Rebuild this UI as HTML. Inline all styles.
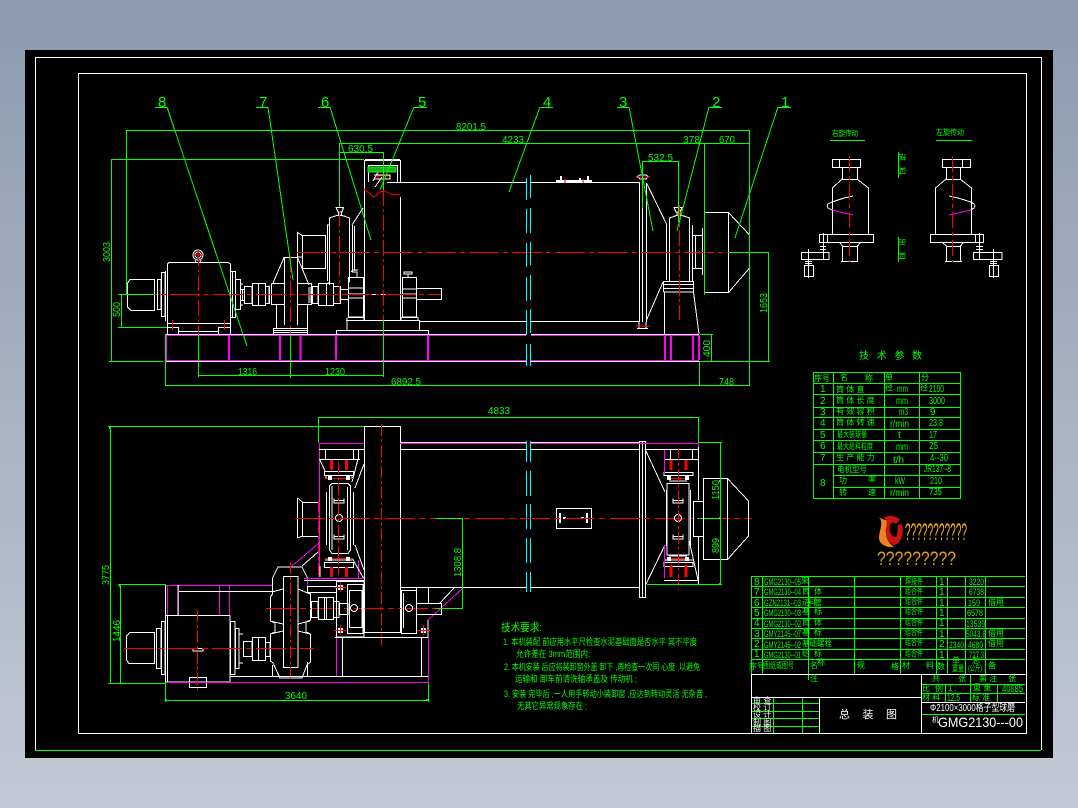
<!DOCTYPE html>
<html><head><meta charset="utf-8"><title>GMG2130</title>
<style>
html,body{margin:0;padding:0;width:1078px;height:808px;overflow:hidden;background:linear-gradient(#8b9bb0,#c3c8d4)}
svg{position:absolute;left:0;top:0;display:block}
text{font-family:"Liberation Sans","WenQuanYi Zen Hei","Noto Sans CJK SC",sans-serif}
.w{stroke:#fff;fill:none}.g{stroke:#0f0;fill:none}.r{stroke:#f00;fill:none}.m{stroke:#f0f;fill:none}.c{stroke:#0ff;fill:none}
.t{fill:#0f0;font-size:10px}.n{fill:#0f0;font-size:9.5px}.s{fill:#0f0;font-size:8px}.l{fill:#0f0;font-size:15px}
</style></head><body>
<svg width="1078" height="808" viewBox="0 0 1078 808" shape-rendering="crispEdges">
<rect x="25" y="50" width="1028" height="708" fill="#000"/>
<path class="w" d="M35.5 750V57.5H1041.5V750M78.5 733.5V73.5H1026.5V733.5H78.5"/>
<path class="g" d="M35 750.5H1041"/>

<!-- ELEVATION white -->
<path class="w" d="M387 182.5H526M531 182.5H639M420 321.5H526M531 321.5H639"/>
<path class="w" d="M364.5 320V160.5H400.5V182M365 159.5H400M364.5 160V320M400.5 197V320M368.5 182V165.5H397.5V182M364 294.5H400M347 320.5V330.5H419.5V320M336.5 334V330.5H428.5V334M346 320.5H420"/>
<path class="w" d="M373 181L378 172M375 187L382 177M378 172H382"/>
<path class="w" d="M348.5 317V277.5H363.5V317ZM347 317.5V320M364 317.5V320M348 288H363M348 294H363M348 298H363M402.5 317V277.5H416.5V317ZM401 317.5V320M418 317.5V320M402 289H416M402 294H416M402 298H416M416 288.5H441.5V299.5H416M348 317.5H364M401 317.5H418"/>
<path class="w" d="M352 272H357V277M353 272H356M351 272L353 270H358M404 272H412V274H404ZM408 274V277.5"/>
<!-- main bearing left -->
<path class="w" d="M329.5 285V218L335 216L339 215L344 216L349.5 218V282M327.5 225V281M352.5 225V272M354.5 226V271M336 207.5H343.5L342 212H338ZM338.5 212V216M341.5 212V216M352 225L363 208M327 225H329M327.5 283H329"/>
<path class="w" d="M297.5 232V258M297 232L302 235.5M302.5 235.5H325.5V268.5H302.5Z M298 257L302 257M302.5 258V268"/>
<!-- reducer -->
<path class="w" d="M273 283L284 257.5H297.5L309 285M284.5 257V325M297.5 257V325M271.5 283.5H284M298 283.5H311.5V304.5H298M284 304.5H271.5V283.5M276.5 305V328M307.5 305V328M273.5 328.5H307.5V334M273.5 328V334M273 330.5H307M273 332.5H307M269 285.5V303"/>
<!-- couplings -->
<path class="w" d="M242.5 290V300M244.5 286.5H252V303.5H244.5ZM252.5 283.5H265.5V305.5H252.5ZM258.5 283.5V305.5M265.5 286.5H269.5V303.5H265.5ZM240 289.5H244M240 300.5H244M312.5 286.5H318V303.5H312.5ZM318.5 283.5H333.5V305.5H318.5ZM326.5 283.5V305.5M333.5 286.5H340.5V303.5H333.5ZM340.5 289.5H348M340.5 299.5H348M309 287V303M311 287V303"/>
<!-- motor -->
<path class="w" d="M167.5 323V264L169 262.5H228L230.5 264V323M165.5 271V321M232.5 272V317.5M230 271.5H235.5V317.5H230M235.5 279.5H240.5V309.5H235.5M240 284H243M240 305H243M161.5 272.5H165V316.5H161.5ZM157.5 279.5H161V309.5H157.5ZM130 279.5H154.5V310.5H131L127.5 307V283ZM167 323.5H230M167.5 323V334M230.5 323V334M167.5 327.5H178.5V334M218.5 334V327.5H230.5M178 331.5H218"/>
<circle class="w" cx="198" cy="255" r="5"/><circle class="w" cx="198" cy="255" r="3"/>
<path class="w" d="M195 260L196 262M201 260L200 262"/>
<!-- base -->
<path class="m" stroke-width="2" d="M166 335V360M229 335V360M280 335V360M300.5 335V360M336 335V360M428 335V360M665 335V360M671 335V360M693 335V360M699 335V360"/>
<path class="w" d="M165 334.5H526M531 334.5H699M165 361.5H526M531 361.5H699"/>
<path class="m" d="M165 335.5H526M531 335.5H699M165 360.5H526M531 360.5H699"/>
<!-- right end elevation -->
<path class="w" d="M639.5 182V322M646.5 183V322M642.5 182V322M637 176.5L640 175H646L648 176.5L646 179H640ZM637 328.5H648M639 328V322M646 328V322M646.5 183L667 225M646.5 320L663 282"/>
<path class="w" d="M669.5 282V218L675 216L678 215L684 216L689.5 218V282M666.5 225V280M692.5 225V281M674 207.5H682L680 212H676ZM677 212V216M680 212V216M663.5 292V281.5H693.5V292H663.5M663 284.5H693M663 288.5H693M664.5 292V334M693.5 292L699 334M692 235.5H703M692 268.5H703M692.5 235V268M695.5 235V268M702.5 228V275M704.5 212.5H728.5V292.5H704.5ZM728.5 212.5L749.5 235V268L728.5 292.5"/>
<path class="w" stroke-width="2" d="M556 181H592M561 176V181M588 176V181M580 178V181"/>
<path class="r" d="M565 178V183M583 178V183"/>
<!-- elevation red -->
<path class="r" stroke-dasharray="30 4 5 4" d="M297 252.5H728M127 294.5H441"/>
<path class="r" stroke-dasharray="16 3 3 3" d="M198.5 250V334M339.5 211V305M290.5 256V334M383.5 190V320M679.5 205V320"/>
<path class="r" d="M172.5 320V330M224.5 320V330M194 255H202M198 251V259M376 176H390M378 172V180M364 189L371 195L374 197L380 192L385 191L390 194L396 195L400 194M650 177H636M636 326H650"/>
<path d="M368 167H396V172H368Z" fill="#2a2" stroke="#0f0"/>
<path class="w" d="M374 175H390V179H374"/>
<!-- cyan break -->
<path class="c" d="M526.5 178V200M526.5 209V233M526.5 243V267M526.5 277V301M526.5 310V335M526.5 344V366M530.5 175V198M530.5 208V233M530.5 242V265M530.5 275V300M530.5 309V333M530.5 344V366"/>

<!-- elevation dims -->
<path class="g" d="M126.5 130.5H749.5M126.5 130V294M339.5 143.5H749M339.5 143V207M339.5 152.5H383M383.5 152V190M642.5 161.5H678.5M642.5 161V208M678.5 161V222M704.5 143V295M749.5 130V386M111.5 159.5H364M111.5 159V361M109 361.5H163M121.5 294V327M118 294.5H155M118 327.5H167M198.5 334V377M290.5 335V378M383.5 320V377M198 375.5H383M165.5 334V386M165 385.5H749M699.5 361V386M728 252.5H768M768.5 252V361M700 361.5H770M711.5 334V361M700 334.5H713"/>
<path class="g" d="M155 107.5H167M167 107L247 346M256 107.5H268M268 107L293 280M318 107.5H330M330 107L371 240M414 107.5H427M414 107L380 190M540 107.5H553M540 107L509 192M617 107.5H629M629 107L653 231M709 107.5H722M709 107L677 231M778 107.5H791M778 107L735 238"/>
<text class="l" x="158" y="107">8</text><text class="l" x="259" y="107">7</text><text class="l" x="321" y="107">6</text><text class="l" x="418" y="107">5</text><text class="l" x="543" y="107">4</text><text class="l" x="619" y="107">3</text><text class="l" x="712" y="107">2</text><text class="l" x="781" y="107">1</text>
<text class="t" x="456" y="130" textLength="30" lengthAdjust="spacingAndGlyphs">8201.5</text>
<text class="t" x="502" y="143" textLength="22" lengthAdjust="spacingAndGlyphs">4233</text>
<text class="t" x="683" y="143" textLength="17" lengthAdjust="spacingAndGlyphs">378</text>
<text class="t" x="719" y="143" textLength="16" lengthAdjust="spacingAndGlyphs">670</text>
<text class="t" x="648" y="161" textLength="25" lengthAdjust="spacingAndGlyphs">532.5</text>
<text class="t" x="348" y="152" textLength="25" lengthAdjust="spacingAndGlyphs">630.5</text>
<text class="t" x="238" y="375" textLength="19" lengthAdjust="spacingAndGlyphs">1316</text>
<text class="t" x="325" y="375" textLength="20" lengthAdjust="spacingAndGlyphs">1230</text>
<text class="t" x="391" y="385" textLength="30" lengthAdjust="spacingAndGlyphs">6892.5</text>
<text class="t" x="719" y="385" textLength="15" lengthAdjust="spacingAndGlyphs">748</text>
<text class="t" transform="translate(110 262) rotate(-90)" textLength="20" lengthAdjust="spacingAndGlyphs">3003</text>
<text class="t" transform="translate(120 317) rotate(-90)" textLength="15" lengthAdjust="spacingAndGlyphs">500</text>
<text class="t" transform="translate(767 313) rotate(-90)" textLength="20" lengthAdjust="spacingAndGlyphs">1653</text>
<text class="t" transform="translate(710 357) rotate(-90)" textLength="17" lengthAdjust="spacingAndGlyphs">400</text>

<!-- ROTATION DIAGRAMS -->
<text class="s" x="832" y="136" textLength="26" lengthAdjust="spacingAndGlyphs">右旋传动</text>
<text class="s" x="936" y="135" textLength="28" lengthAdjust="spacingAndGlyphs">左旋传动</text>
<path class="g" d="M830 140.5H865M936 140.5H972M898.5 152V178M898.5 237V262"/>
<text class="s" transform="translate(899 153) rotate(90)" textLength="22" lengthAdjust="spacing">进料</text>
<text class="s" transform="translate(899 238) rotate(90)" textLength="22" lengthAdjust="spacing">出料</text>
<path class="w" d="M832.5 159.5H860.5V167.5H832.5ZM839.5 159V167M842.5 167V179.5H857.5V167M842 179L832.5 188V234M857 179L868.5 188V234M819.5 234.5H873.5V242.5H819.5ZM827.5 234V242M840 243L842.5 246M860 243L857.5 246M842.5 246V261M857.5 246V261M842.5 246.5H857.5M841 261.5H858M801.5 252.5H829V259.5H801.5ZM823.5 233V260M820 246.5H826M820 249.5H826M808.5 249V278M804.5 265.5H813.5V276.5H804.5ZM805 261.5H812M805 263.5H812"/>
<path class="w" d="M853 196L844 198L832 202L828 204L827 206L828 208L832 210"/>
<path class="m" d="M832 210L844 213L853 215"/>
<path class="r" stroke-dasharray="16 4 4 4" d="M849.5 156V262"/>
<path class="w" d="M942.5 159.5H970.5V167.5H942.5ZM962.5 159V167M946.5 167V179.5H960.5V167M946 179L935.5 188V234M960 179L971.5 188V234M930.5 234.5H983.5V242.5H930.5ZM975.5 234V242M943 243L946.5 246M963 243L960.5 246M946.5 246V261M960.5 246V261M946.5 246.5H960.5M945 261.5H962M973.5 252.5H1002V259.5H973.5ZM979.5 233V260M976 246.5H983M976 249.5H983M993.5 249V278M989.5 265.5H998.5V276.5H989.5ZM990 261.5H997M990 263.5H997"/>
<path class="w" d="M949 196L958 198L971 202L974 204L975 206L974 208L971 210"/>
<path class="m" d="M971 210L958 213L949 215"/>
<path class="r" stroke-dasharray="16 4 4 4" d="M952.5 156V262"/>

<!-- TECH PARAM TABLE -->
<text x="859" y="359" fill="#0f0" font-size="10" textLength="63">技 术 参 数</text>
<path class="g" d="M813.5 372V498.5M833.5 372V498M884.5 372V498M919.5 372V498M960.5 372V498M813 372.5H961M813 383.5H961M813 394.5H961M813 407.5H961M813 417.5H961M813 429.5H961M813 440.5H961M813 452.5H961M813 464.5H961M833 475.5H961M833 487.5H961M813 498.5H961"/>
<g>
<text class="s" x="814" y="381">序号</text><text class="s" x="840" y="380">名</text><text class="s" x="865" y="381">称</text><text class="s" x="885" y="380">单</text><text class="s" x="921" y="380">分</text>
<text class="t" x="820" y="392">1</text><text class="s" x="836" y="392">筒 体 直</text><text class="s" x="885" y="390">径</text><text class="t" x="897" y="392" textLength="11" lengthAdjust="spacingAndGlyphs">mm</text><text class="s" x="920" y="390">径</text><text class="t" x="929" y="392" textLength="15" lengthAdjust="spacingAndGlyphs">2100</text>
<text class="t" x="820" y="404">2</text><text class="s" x="836" y="403">筒 体 长 度</text><text class="t" x="896" y="404" textLength="12" lengthAdjust="spacingAndGlyphs">mm</text><text class="t" x="929" y="404" textLength="16" lengthAdjust="spacingAndGlyphs">3000</text>
<text class="t" x="820" y="415">3</text><text class="s" x="836" y="414">有 效 容 积</text><text class="t" x="899" y="415" textLength="9" lengthAdjust="spacingAndGlyphs">m3</text><text class="t" x="930" y="415">9</text>
<text class="t" x="820" y="426">4</text><text class="s" x="836" y="425">筒 体 转 速</text><text class="t" x="890" y="427" textLength="19" lengthAdjust="spacingAndGlyphs">r/min</text><text class="t" x="929" y="426" textLength="14" lengthAdjust="spacingAndGlyphs">23.8</text>
<text class="t" x="820" y="438">5</text><text class="s" x="837" y="437" textLength="30" lengthAdjust="spacingAndGlyphs">最大装球量</text><text class="t" x="898" y="438">t</text><text class="t" x="929" y="438" textLength="8" lengthAdjust="spacingAndGlyphs">17</text>
<text class="t" x="820" y="449">6</text><text class="s" x="837" y="449" textLength="36" lengthAdjust="spacingAndGlyphs">最大给料粒度</text><text class="t" x="896" y="450" textLength="12" lengthAdjust="spacingAndGlyphs">mm</text><text class="t" x="929" y="449" textLength="9" lengthAdjust="spacingAndGlyphs">25</text>
<text class="t" x="820" y="461">7</text><text class="s" x="836" y="460">生 产 能 力</text><text class="t" x="893" y="463" textLength="11" lengthAdjust="spacingAndGlyphs">t/h</text><text class="t" x="930" y="461" textLength="18" lengthAdjust="spacingAndGlyphs">4--30</text>
<text class="t" x="820" y="486">8</text><text class="s" x="837" y="472" textLength="30" lengthAdjust="spacingAndGlyphs">电机型号</text><text class="t" x="924" y="472" textLength="27" lengthAdjust="spacingAndGlyphs">JR137--8</text>
<text class="s" x="839" y="483">功</text><text class="s" x="868" y="482">率</text><text class="t" x="895" y="484" textLength="10" lengthAdjust="spacingAndGlyphs">kW</text><text class="t" x="930" y="484" textLength="12" lengthAdjust="spacingAndGlyphs">210</text>
<text class="s" x="839" y="495">转</text><text class="s" x="868" y="495">速</text><text class="t" x="890" y="496" textLength="19" lengthAdjust="spacingAndGlyphs">r/min</text><text class="t" x="929" y="495" textLength="13" lengthAdjust="spacingAndGlyphs">735</text>
</g>
<!-- logo -->
<g shape-rendering="auto">
<path d="M879 517C884 523 879 531 879 538C879 544 886 548 894 547C888 543 885 536 886 529C887 525 889 522 888 518C886 521 883 520 879 517Z" fill="#ee8420"/>
<path d="M884 517C890 515 897 516 900 520L896 524C894 522 891 522 890 525C889 531 891 537 896 537C898 534 897 530 898 525L902 524C904 533 902 543 894 545C888 543 885 536 886 528C887 524 887 520 884 517Z" fill="#c81410"/>
</g>
<text x="905" y="540" fill="#f0b018" font-size="24" textLength="62" lengthAdjust="spacingAndGlyphs">???????????</text>
<text x="877" y="565" fill="#e8a018" font-size="19" textLength="79" lengthAdjust="spacingAndGlyphs">?????????</text>

<!-- PARTS LIST -->
<path class="g" d="M751 576.5H1025M751 586.5H1025M751 597.5H1025M751 607.5H1025M751 618.5H1025M751 628.5H1025M751 638.5H1025M751 649.5H1025M751 659.5H1025M751.5 576V674M762.5 576V674M808.5 576V680M854.5 576V674M900.5 576V674M936.5 576V674M947.5 576V674M965.5 576V674M985.5 576V674M921 684.5H1025M921 693.5H1025M945.5 684V702M970.5 674V702M997.5 684V702M921 714.5H1025M773.5 697V733M802.5 697V733M751 703.5H819M751 711.5H819M751 718.5H819M751 726.5H819"/>
<path class="w" d="M751 674.5H1025.5M751.5 674V733M921.5 674V733M751 697.5H921M819.5 697V733M921 702.5H1025"/>
<g>
<text class="t" x="754" y="585">8</text><text class="n" x="764" y="585" textLength="37" lengthAdjust="spacingAndGlyphs">GMG2130--05</text><text class="s" x="801" y="583">架</text><text class="s" x="905" y="584" textLength="18" lengthAdjust="spacingAndGlyphs">焊接件</text><text class="t" x="939" y="585">1</text><text class="n" x="969" y="585" textLength="15" lengthAdjust="spacingAndGlyphs">3220</text>
<text class="t" x="754" y="595">7</text><text class="n" x="764" y="595" textLength="37" lengthAdjust="spacingAndGlyphs">GMG2130--04</text><text class="s" x="802" y="594" textLength="20">筒 体</text><text class="s" x="905" y="594" textLength="18" lengthAdjust="spacingAndGlyphs">组合件</text><text class="t" x="939" y="595">1</text><text class="n" x="969" y="595" textLength="15" lengthAdjust="spacingAndGlyphs">6738</text>
<text class="t" x="754" y="606">6</text><text class="n" x="764" y="606" textLength="37" lengthAdjust="spacingAndGlyphs">GZN2131--03</text><text class="s" x="802" y="605" textLength="20">进料管</text><text class="s" x="905" y="604" textLength="18" lengthAdjust="spacingAndGlyphs">组合件</text><text class="t" x="939" y="606">1</text><text class="n" x="968" y="606" textLength="12" lengthAdjust="spacingAndGlyphs">159</text><text class="s" x="988" y="605">借用</text>
<text class="t" x="754" y="616">5</text><text class="n" x="764" y="616" textLength="37" lengthAdjust="spacingAndGlyphs">GMG2130--03</text><text class="s" x="802" y="614" textLength="20">基 标</text><text class="s" x="905" y="614" textLength="18" lengthAdjust="spacingAndGlyphs">组合件</text><text class="t" x="939" y="616">1</text><text class="n" x="967" y="616" textLength="16" lengthAdjust="spacingAndGlyphs">6578</text>
<text class="t" x="754" y="626">4</text><text class="n" x="764" y="627" textLength="37" lengthAdjust="spacingAndGlyphs">GMG2130--02</text><text class="s" x="802" y="625" textLength="20">筒 体</text><text class="s" x="905" y="625" textLength="18" lengthAdjust="spacingAndGlyphs">组合件</text><text class="t" x="939" y="626">1</text><text class="n" x="966" y="627" textLength="19" lengthAdjust="spacingAndGlyphs">13539</text>
<text class="t" x="754" y="637">3</text><text class="n" x="764" y="637" textLength="37" lengthAdjust="spacingAndGlyphs">GMY2145--07</text><text class="s" x="802" y="635" textLength="20">基 标</text><text class="s" x="905" y="635" textLength="18" lengthAdjust="spacingAndGlyphs">组合件</text><text class="t" x="939" y="637">1</text><text class="n" x="966" y="637" textLength="20" lengthAdjust="spacingAndGlyphs">5043.6</text><text class="s" x="988" y="636">借用</text>
<text class="t" x="754" y="647">2</text><text class="n" x="764" y="648" textLength="37" lengthAdjust="spacingAndGlyphs">GMY2145--02</text><text class="s" x="802" y="646" textLength="30" lengthAdjust="spacingAndGlyphs">基础螺栓</text><text class="s" x="905" y="645" textLength="18" lengthAdjust="spacingAndGlyphs">组合件</text><text class="t" x="939" y="647">2</text><text class="n" x="949" y="648" textLength="15" lengthAdjust="spacingAndGlyphs">2340</text><text class="n" x="968" y="648" textLength="15" lengthAdjust="spacingAndGlyphs">4680</text><text class="s" x="988" y="646">借用</text>
<text class="t" x="754" y="657">1</text><text class="n" x="764" y="658" textLength="37" lengthAdjust="spacingAndGlyphs">GMG2130--01</text><text class="s" x="802" y="656" textLength="20">给 标</text><text class="s" x="905" y="656" textLength="18" lengthAdjust="spacingAndGlyphs">组合件</text><text class="t" x="939" y="658">1</text><text class="n" x="969" y="658" textLength="15" lengthAdjust="spacingAndGlyphs">727.3</text>
<text class="s" x="749" y="669">序号</text><text class="s" x="764" y="668" textLength="30" lengthAdjust="spacingAndGlyphs">图纸或图号</text><text class="s" x="810" y="668">名</text><text class="s" x="817" y="665">称</text><text class="s" x="857" y="668">规</text><text class="s" x="891" y="669">格</text><text class="s" x="902" y="668">材</text><text class="s" x="926" y="668">料</text><text class="s" x="937" y="669">数</text><text class="s" x="952" y="663">单</text><text class="s" x="952" y="671" textLength="12" lengthAdjust="spacingAndGlyphs">重量</text><text class="s" x="972" y="663">总</text><text class="s" x="968" y="671" textLength="14" lengthAdjust="spacingAndGlyphs">(公斤)</text><text class="s" x="988" y="668">备</text><text class="s" x="810" y="681">注</text>
<text class="s" x="932" y="681">共</text><text class="s" x="958" y="681">张</text><text class="s" x="979" y="681">第 注</text><text class="s" x="1008" y="681">张</text>
<text class="s" x="922" y="691">比</text><text class="s" x="935" y="691">例</text><text class="s" x="948" y="691">1 :</text><text class="s" x="973" y="690">重 量</text><text class="t" x="1002" y="692" textLength="21" lengthAdjust="spacingAndGlyphs">40685</text>
<text class="s" x="922" y="700">材 料</text><text class="t" x="947" y="701" textLength="13" lengthAdjust="spacingAndGlyphs">12.5</text><text class="s" x="972" y="700">标 准</text>
</g>
<g font-size="8" fill="#fff">
<text x="753" y="703">审 查</text><text x="753" y="710">校 订</text><text x="753" y="717">设 计</text><text x="753" y="725">制 图</text><text x="753" y="731">描 图</text>
</g>
<text x="839" y="718" fill="#fff" font-size="11" textLength="58">总 装 图</text>
<text x="930" y="711" fill="#fff" font-size="10" textLength="85" lengthAdjust="spacingAndGlyphs">Φ2100×3000格子型球磨</text>
<text x="932" y="722" fill="#fff" font-size="7">机</text>
<text x="938" y="727" fill="#fff" font-size="14" textLength="85" lengthAdjust="spacingAndGlyphs">GMG2130---00</text>

<!-- PLAN VIEW -->
<path class="w" d="M400 442.5H526M531 442.5H639M400 449.5H526M531 449.5H639M400 587.5H526M531 587.5H639M364.5 426.5H400.5V632.5H364.5ZM639.5 441.5H645.5V597.5H639.5ZM642.5 441V597M556.5 508.5H591.5V528.5H556.5Z"/>
<path class="m" d="M319 443.5H364M400 443.5H526M531 443.5H645M645 443.5H698"/>
<path class="w" stroke-width="2" d="M560 513V523M587 513V523M563 518H566M581 518H584"/>
<path class="c" d="M526.5 441V462M526.5 471V496M526.5 504V529M526.5 538V563M526.5 572V592M530.5 441V462M530.5 471V496M530.5 504V529M530.5 538V563M530.5 572V592"/>
<!-- left plan bearing -->
<path class="m" d="M319.5 443V577M319 578.5H364M358.5 560V578"/>
<path class="w" d="M319 449.5H364M319 459.5H360M325.5 450V459M353.5 450V459M358.5 450V459M320 460L325 471M358 459L352 482M364 464L355 488M324.5 471.5H353.5V475.5H324.5ZM326 475.5V479M352 475V479M329.5 486L332 483.5H348L350.5 486V550L348 553.5H332L329.5 550ZM326.5 492V545M353.5 492V545M332 486V550M347.5 487V550M324.5 562.5H353.5V567.5H324.5ZM325 560H352M320 577L320 566M352 558L364 579M355 545L364 570M334.5 500.5H343.5M334.5 536.5H343.5M334 498.5V503H344V498.5M334 534.5V539H344V534.5"/>
<path class="w" d="M297.5 498L302.5 502M302.5 502.5H319M302.5 536.5H319M302.5 502V536M297.5 498V538L302.5 536"/>
<path class="r" stroke-width="3" d="M331.5 460V470M346.5 460V470M331.5 567V577M346.5 567V577"/>
<path class="r" d="M325 478.5H353M325 558.5H353"/>
<g fill="#fff"><rect x="328" y="476" width="4" height="4"/><rect x="346" y="476" width="4" height="4"/><rect x="328" y="557" width="4" height="4"/><rect x="346" y="557" width="4" height="4"/></g>
<circle class="w" cx="339" cy="518" r="3.5"/>
<path class="r" stroke-dasharray="12 3 3 3" d="M338.5 462V575M318.5 500V580M381.5 424V648"/>
<path class="r" stroke-dasharray="30 4 6 5" d="M295 518.5H752"/>
<path class="g" d="M435 518.5H462M697 518.5H720"/>
<path class="w" d="M302 566L318 552"/>
<path class="m" d="M292 566L319 543"/>
<!-- right plan bearing -->
<path class="w" d="M645 449.5H698M664 459.5H698M670.5 450V459M692.5 450V459M664 472.5H693V475.5H664ZM667 483.5H689V555H667ZM669 481H687M669 556H687M666.5 490V546M690.5 490V546M664 562.5H693V566.5H664ZM664 580.5H698M698.5 443V500M698.5 536V584M693 501.5H703M693 536.5H703M690.5 497V540M693.5 501V536M703.5 478.5H727.5V559.5H703.5ZM703.5 501V536M727.5 478.5L748.5 501V536L727.5 559.5M645 449L665 492M646 584L665 545M673 500.5H683M673 536.5H683M673 498.5V503H683V498.5M673 534.5V539H683V534.5M665 560L693 560M670 460V462M689 540L698 580"/>
<path class="m" d="M664.5 450V473M664.5 545V578M647 584.5H698M698.5 443V447"/>
<path class="r" stroke-width="3" d="M671 460V470M686 460V470M671 565V577M686 565V577"/>
<path class="r" d="M667 478.5H690M667 558.5H690"/>
<g fill="#fff"><rect x="667" y="476" width="4" height="4"/><rect x="685" y="476" width="4" height="4"/><rect x="667" y="557" width="4" height="4"/><rect x="685" y="557" width="4" height="4"/></g>
<circle class="w" cx="678" cy="518" r="3.5"/>
<path class="r" stroke-dasharray="12 3 3 3" d="M678.5 448V590"/>
<!-- gear -->
<path class="w" d="M278 567H302L307.5 578V592L310.5 594V620L306 622V632L310.5 634V662L307 665L302 678H280L273 663L270.5 661V634L275 632V623L270.5 621V597L272.5 594V578ZM283.5 576.5H298V667.5H283.5ZM272 592L283 589M298 589L310 594M270 621L283 624M298 624L310 621M270 634L283 631M298 631L310 634"/>
<!-- motor plan -->
<path class="w" d="M165.5 615.5H230V682H165.5ZM167.5 616V682M130 632.5H154.5V663.5H129L126.5 660V636ZM156.5 628.5H161V668.5H156.5ZM161.5 621.5H165V674.5H161.5ZM230.5 621.5H235V674.5H230.5ZM235.5 628.5H239V668.5H235.5ZM239 634H243M239 663H243M243.5 641.5H252V656.5H243.5ZM252.5 637.5H265.5V660.5H252.5ZM258.5 637V660M265.5 642.5H270V656.5H265.5ZM189.5 677.5H206.5V687.5H189.5ZM193 648.5H203V651H193Z"/>
<path class="r" stroke-dasharray="12 3 3 3" d="M197.5 610V690M290.5 562V680"/>
<path class="r" stroke-dasharray="30 4 6 4" d="M124 648.5H314M266 608.5H435"/>
<!-- frames -->
<path class="m" d="M165 585.5H272M167.5 585V615M178.5 585V615M219.5 585V615M229.5 585V615M167 682.5H428M428.5 637V683M336.5 637V676M304 578.5H364M428 620L463 588M307.5 578V586"/>
<path class="w" d="M165.5 584V615M178 585V615M229 591.5H272M219 591.5H229M179 591.5H219M230 676.5H428M335 637.5H428M342.5 637V676M421.5 637V676M272.5 665V676M307.5 662V676M304 580.5H364M307 586.5H336M307 592.5H336M400 587.5H464M416.5 587V603M428.5 587V603M428 620V637M440 603L454 588"/>
<path class="w" d="M311.5 601.5H318V617.5H311.5ZM318.5 597.5H333.5V619.5H318.5ZM326.5 597V619M324.5 597V619M333.5 601.5H339V617.5H333.5ZM339.5 603.5H348V614.5H339.5ZM336.5 581.5H364V637H336.5ZM347.5 584.5H363V633.5H347.5ZM349.5 590.5H362V627.5H349.5ZM401.5 590.5H416.5V633.5H401.5ZM403.5 593V628M416.5 603.5H441.5V614.5H416.5Z"/>
<circle class="w" cx="354" cy="608" r="3.5"/><circle class="w" cx="409" cy="608" r="3.5"/>
<g fill="#fff"><rect x="338" y="585" width="5" height="5"/><rect x="338" y="628" width="5" height="5"/><rect x="421" y="628" width="5" height="5"/></g>
<path class="r" d="M340.5 582V592M340.5 625V635M423.5 625V635M334 587.5H346M334 630.5H346M417 630.5H430"/>
<!-- plan dims -->
<path class="g" d="M318.5 417.5H698M318.5 417V443M698.5 417V443M110.5 426V683M108 426.5H364M108 683.5H166M120.5 584V683M118 584.5H166M165.5 683V702M165 700.5H428M428.5 683V702M462.5 518V608M435 608.5H463M720.5 442V584M698 442.5H722M647 584.5H722"/>
<path class="g" stroke-width="2" d="M720 480V482M720 517V519M720 583V585M166 699V701M427 699V701M110 427V429M120 585V587"/>
<text class="t" x="488" y="414" textLength="22" lengthAdjust="spacingAndGlyphs">4833</text>
<text class="t" transform="translate(109 585) rotate(-90)" textLength="20" lengthAdjust="spacingAndGlyphs">3775</text>
<text class="t" transform="translate(120 642) rotate(-90)" textLength="22" lengthAdjust="spacingAndGlyphs">1446</text>
<text class="t" x="285" y="699" textLength="22" lengthAdjust="spacingAndGlyphs">3640</text>
<text class="t" transform="translate(461 577) rotate(-90)" textLength="29" lengthAdjust="spacingAndGlyphs">1308.8</text>
<text class="t" transform="translate(719 500) rotate(-90)" textLength="20" lengthAdjust="spacingAndGlyphs">1150</text>
<text class="t" transform="translate(719 553) rotate(-90)" textLength="15" lengthAdjust="spacingAndGlyphs">899</text>

<!-- NOTES -->
<g fill="#0f0" font-size="9">
<text x="501" y="631" font-size="11" textLength="41" lengthAdjust="spacingAndGlyphs">技术要求:</text>
<text x="503" y="645" textLength="194" lengthAdjust="spacingAndGlyphs">1. 本机装配 前应用水平尺检查水泥基础面是否水平 其不平度</text>
<text x="516" y="657" textLength="74" lengthAdjust="spacingAndGlyphs">允许差在 3mm范围内;</text>
<text x="504" y="670" textLength="196" lengthAdjust="spacingAndGlyphs">2. 本机安装 后应将装卸窗外盖 卸下 ,再检查一次同 心度 ,以避免</text>
<text x="515" y="682" textLength="122" lengthAdjust="spacingAndGlyphs">运输和 卸车前清洗轴承盖及 传动机 ;</text>
<text x="504" y="697" textLength="203" lengthAdjust="spacingAndGlyphs">3. 安装 完毕后 ,一人用手转动小装卸窗 ,应达到转动灵活 无杂音 ,</text>
<text x="517" y="709" textLength="70" lengthAdjust="spacingAndGlyphs">无其它异常现象存在 ;</text>
</g>
</svg>
</body></html>
